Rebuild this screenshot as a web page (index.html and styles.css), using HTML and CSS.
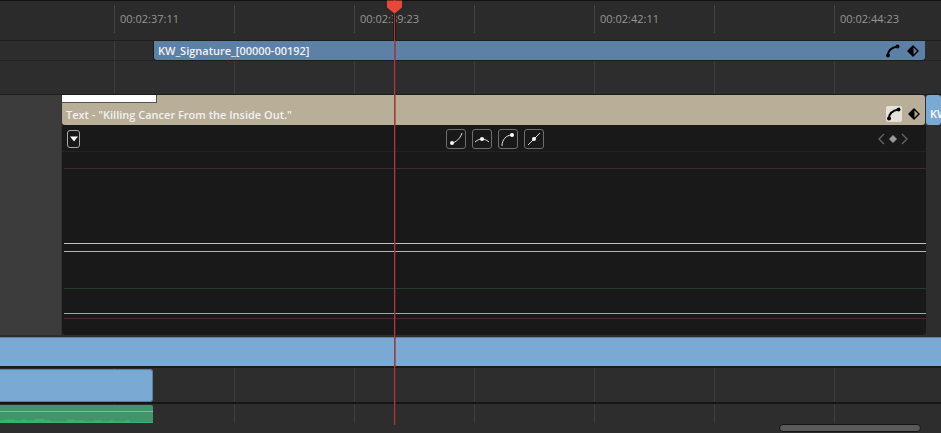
FILE: index.html
```html
<!DOCTYPE html>
<html lang="en">
<head>
  <meta charset="UTF-8" />
  <title>Timeline</title>
  <link rel="stylesheet" href="styles.css">
</head>
<body>
  <div class="timeline">
    <div class="ruler">
      <span class="tc">00:02:37:11</span>
      <span class="tc">00:02:39:23</span>
      <span class="tc">00:02:42:11</span>
      <span class="tc">00:02:44:23</span>
    </div>

    <div class="track track-sig">
      <div class="clip clip-sig">
        <span class="clip-name">KW_Signature_[00000-00192]</span>
        <span class="clip-tools">
          <svg class="ic" viewBox="0 0 16 16"><path d="M3 12.500C3 7.500 6.500 4.500 12.500 3.500" fill="none" stroke="#000" stroke-width="2"/><circle cx="3" cy="12.500" r="2"/><circle cx="12.500" cy="3.500" r="2"/></svg>
          <svg class="ic" viewBox="0 0 16 16"><path d="M8 2L14 8L8 14L2 8Z" fill="#000"/><path d="M8.500 4.500L12 8L8.500 11.500Z" fill="#5c80a6"/></svg>
        </span>
      </div>
    </div>

    <div class="track track-gap"></div>

    <div class="text-block">
      <div class="side"></div>
      <div class="text-main">
        <div class="clip clip-text">
          <div class="clip-thumb"></div>
          <div class="clip-row">
            <span class="clip-name">Text - "Killing Cancer From the Inside Out."</span>
            <span class="clip-tools">
              <span class="tool-on">
                <svg class="ic" viewBox="0 0 16 16"><path d="M3 12.500C3 7.500 6.500 4.500 12.500 3.500" fill="none" stroke="#000" stroke-width="2"/><circle cx="3" cy="12.500" r="2"/><circle cx="12.500" cy="3.500" r="2"/></svg>
              </span>
              <svg class="ic" viewBox="0 0 16 16"><path d="M8 2L14 8L8 14L2 8Z" fill="#000"/><path d="M8.500 4.500L12 8L8.500 11.500Z" fill="#b9ae98"/></svg>
            </span>
          </div>
        </div>
        <div class="editor">
          <div class="editor-bar">
            <button class="menu-btn"><svg viewBox="0 0 8 6" width="8" height="6"><path d="M0 0.500H8L4 5.500Z" fill="#fff"/></svg></button>
            <div class="curve-btns">
              <button class="curve-btn"><svg viewBox="1 1 18 18"><path d="M6 14C10 13 14 10 16 4" fill="none" stroke="#ddd"/><circle cx="6" cy="14" r="2" fill="#fff"/></svg></button>
              <button class="curve-btn"><svg viewBox="1 1 18 18"><path d="M3 13C6 10.500 8 10 10 10C12 10 14 10.500 17 13" fill="none" stroke="#ddd"/><circle cx="10" cy="10" r="2" fill="#fff"/></svg></button>
              <button class="curve-btn"><svg viewBox="1 1 18 18"><path d="M4 17C4 11 8 6 14 6" fill="none" stroke="#ddd"/><circle cx="14" cy="6" r="2" fill="#fff"/></svg></button>
              <button class="curve-btn"><svg viewBox="1 1 18 18"><path d="M4 16L16 4" fill="none" stroke="#ddd"/><circle cx="10" cy="10" r="2" fill="#fff"/></svg></button>
            </div>
            <div class="key-nav">
              <svg viewBox="0 0 32 12" width="32" height="12"><path d="M7 1L2 6L7 11" fill="none" stroke="#666" stroke-width="1.300"/><path d="M16 2L20 6L16 10L12 6Z" fill="#999"/><path d="M25 1L30 6L25 11" fill="none" stroke="#666" stroke-width="1.300"/></svg>
            </div>
          </div>
          <svg class="graph" viewBox="0 0 862 182" preserveAspectRatio="none">
            <line x1="0" x2="862" y1="16.500" y2="16.500" stroke="#422a2c"/>
            <line x1="0" x2="862" y1="91.500" y2="91.500" stroke="#c4c0c0"/>
            <line x1="0" x2="862" y1="99.500" y2="99.500" stroke="#b5b5b5"/>
            <line x1="0" x2="862" y1="136.500" y2="136.500" stroke="#263a2e"/>
            <line x1="0" x2="862" y1="161.500" y2="161.500" stroke="#a8a4a4"/>
            <line x1="0" x2="862" y1="166.500" y2="166.500" stroke="#4a2a30"/>
          </svg>
        </div>
      </div>
      <div class="clip clip-next"><span class="clip-name">KW</span></div>
    </div>

    <div class="track-full"></div>

    <div class="track track-v1">
      <div class="clip-blue"></div>
    </div>

    <div class="track track-a1">
      <div class="clip-audio">
        <svg class="wave" viewBox="0 0 152 7" preserveAspectRatio="none"><path d="M0 7V5H4V4H13V3.500H14V5H22V4H25V5H35V3.500H44V5H50V6H67V4H72V3.500H74V5H84V6H95V5H101V6H110V5H113V6H126V5H130V7Z" fill="#35b56b"/></svg>
      </div>
    </div>

    <div class="scroll-row">
      <div class="scroll-thumb"></div>
    </div>
  </div>

  <div class="playhead"><svg class="playhead-top" viewBox="0 0 16 14" width="15" height="14"><path d="M0 0H16V7.500L8 14L0 7.500Z" fill="#e8483a"/></svg></div>
</body>
</html>
```

FILE: styles.css
```css
body {
  margin: 0;
  background: #2d2d2d;
  width: 941px;
  height: 433px;
  overflow: hidden;
  position: relative;
  font-family: "Open Sans", sans-serif;
  font-size: 11px;
  color: #fff;
}

button {
  padding: 0;
  margin: 0;
  background: none;
  display: flex;
  align-items: center;
  justify-content: center;
}

.timeline {
  display: flex;
  flex-direction: column;
  height: 433px;
}

/* ticks every 120px, first at x=114 */
.ruler {
  height: 41px;
  flex: none;
  box-sizing: border-box;
  border-top: 1px solid #111;
  border-bottom: 1px solid #1e1e1e;
  background: #2b2b2b repeating-linear-gradient(90deg, transparent 0, transparent 114px, #454545 114px, #454545 115px, transparent 115px, transparent 120px) 0 4px / 120px 28px repeat-x;
  display: flex;
  padding-left: 120px;
  align-items: flex-start;
}

.tc {
  width: 240px;
  flex: none;
  margin-top: 10px;
  line-height: 16px;
  color: #969696;
}

.track {
  background: #2d2d2d repeating-linear-gradient(90deg, transparent 0, transparent 114px, #3d3d3d 114px, #3d3d3d 115px, transparent 115px, transparent 120px);
  background-size: 120px 100%;
}

.track-sig {
  height: 20px;
  flex: none;
  padding-left: 154px;
  border-bottom: 1px solid #222;
  box-sizing: border-box;
}

.track-gap {
  height: 33px;
  flex: none;
  border-bottom: 1px solid #1c1c1c;
}

.clip {
  border-radius: 3px;
  box-sizing: border-box;
}

.clip-sig {
  width: 771px;
  height: 19px;
  background: #5c80a6;
  border-radius: 0 0 3px 3px;
  box-shadow: 0 1px 0 #1c1c1c, -1px 0 0 #1c1c1c;
  display: flex;
  align-items: center;
  justify-content: space-between;
  padding: 0 4px;
  font-weight: 600;
  color: #f2f2f2;
}

.clip-name {
  white-space: nowrap;
}

.clip-tools {
  display: flex;
  align-items: center;
  gap: 4px;
}

.ic {
  width: 16px;
  height: 16px;
  display: block;
}

.text-block {
  display: flex;
  height: 240px;
  flex: none;
}

.side {
  width: 61px;
  background: #3c3c3c;
  border-right: 1px solid #333;
  flex: none;
}

.text-main {
  width: 864px;
  flex: none;
  display: flex;
  flex-direction: column;
}

.clip-text {
  height: 30px;
  margin-right: 1px;
  background: #b9ae98;
  font-weight: 600;
  color: #f2f2f2;
  display: flex;
  flex-direction: column;
  flex: none;
}

.clip-thumb {
  width: 95px;
  height: 8px;
  background: #fff;
  box-sizing: border-box;
  border-right: 1px solid #555;
  border-bottom: 1px solid #555;
  flex: none;
}

.clip-row {
  flex: 1;
  display: flex;
  align-items: center;
  justify-content: space-between;
  padding: 0 3px 0 4px;
}

.tool-on {
  background: #e6e2da;
  border-radius: 2px;
  display: block;
}

.editor {
  flex: 1;
  background: #191919;
  border-radius: 0 0 4px 4px;
  display: flex;
  flex-direction: column;
}

.editor-bar {
  height: 27px;
  box-sizing: border-box;
  border-bottom: 1px solid #232323;
  display: flex;
  align-items: center;
  padding: 1px 17px 0 5px;
  flex: none;
}

.menu-btn {
  width: 13px;
  height: 18px;
  border: 1px solid #aaa;
  border-radius: 3px;
  flex: none;
}

.curve-btns {
  display: flex;
  gap: 6px;
  margin-left: 366px;
}

.curve-btn {
  width: 20px;
  height: 20px;
  border: 1px solid #6e6e6e;
  border-radius: 3px;
}

.curve-btn svg {
  width: 18px;
  height: 18px;
}

.key-nav {
  margin-left: auto;
  display: flex;
}

.graph {
  width: 862px;
  height: 182px;
  margin-left: 2px;
  display: block;
}

.clip-next {
  flex: 1;
  height: 30px;
  background: #7aa9d3;
  padding-left: 4px;
  font-weight: 600;
  line-height: 38px;
  overflow: hidden;
}

.track-full {
  height: 31px;
  flex: none;
  margin-top: 2px;
  background: #7aa9d3;
  border-top: 1px solid #5f7f9f;
  border-bottom: 2px solid #1a1a1a;
  box-sizing: border-box;
}

.track-v1 {
  height: 36px;
  flex: none;
  padding-top: 1px;
  box-sizing: border-box;
  border-bottom: 2px solid #151515;
}

.clip-blue {
  width: 153px;
  height: 33px;
  background: #7aa9d3;
  border-radius: 0 3px 3px 0;
  box-sizing: border-box;
  border: 1px solid #5b7ea3;
  border-left: 0;
}

.track-a1 {
  height: 19px;
  flex: none;
  padding-top: 1px;
  box-sizing: border-box;
}

.clip-audio {
  width: 153px;
  height: 18px;
  background: #42946a linear-gradient(transparent 6px, #84b896 6px, #84b896 7px, transparent 7px);
  border-radius: 0 2px 0 0;
  box-sizing: border-box;
  border-bottom: 1px solid #35b56b;
  padding-top: 11px;
}

.wave {
  display: block;
  width: 152px;
  height: 6px;
}

.scroll-row {
  flex: 1;
  display: flex;
  padding: 1px 20px 1px 779px;
  min-height: 0;
}

.scroll-thumb {
  flex: 1;
  background: #5a5a5a;
  border: 1px solid #151515;
  border-radius: 4px;
}

/* playhead sits over everything */
.playhead {
  position: absolute;
  left: 394px;
  top: 0;
  width: 1px;
  height: 425px;
  background: #b03a33;
  box-shadow: 1px 0 0 rgba(120, 40, 36, 0.5);
}

/* dark halo where the line crosses the ruler */
.playhead::before {
  content: "";
  position: absolute;
  left: -1px;
  top: 0;
  width: 3px;
  height: 40px;
  background: linear-gradient(90deg, #1c1a1a 1px, #b03a33 1px, #b03a33 2px, #1c1a1a 2px);
}

.playhead-top {
  position: absolute;
  left: -7px;
  top: 0;
}
```
